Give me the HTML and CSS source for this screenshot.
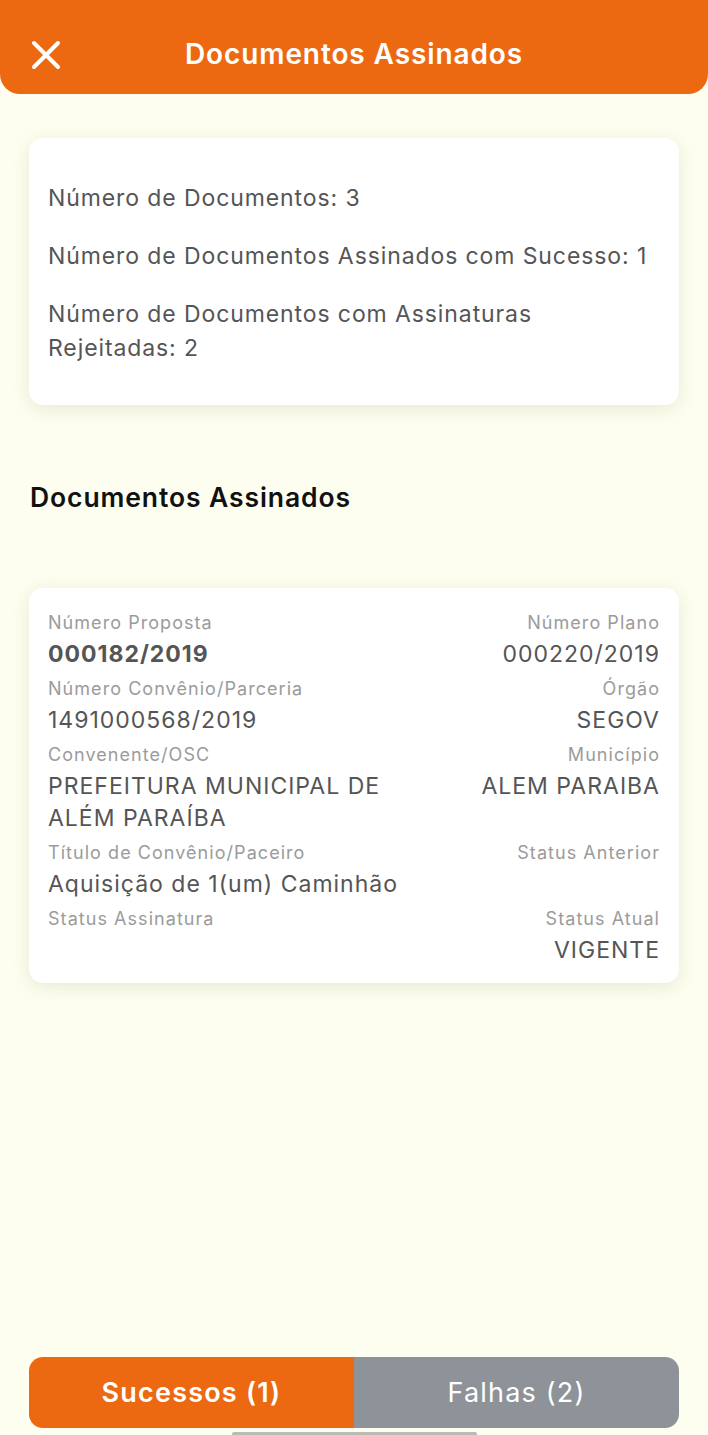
FILE: index.html
```html
<!DOCTYPE html>
<html lang="pt-BR">
<head>
<meta charset="utf-8">
<title>Documentos Assinados</title>
<link rel="stylesheet" href="styles.css">
</head>
<body>
<header class="topbar">
  <button class="close" aria-label="Fechar">
    <svg width="30" height="30" viewBox="0 0 30 30"><path d="M3 3 L27 27 M27 3 L3 27" stroke="#fff" stroke-width="4" stroke-linecap="round" fill="none"/></svg>
  </button>
  <h1 class="title">Documentos Assinados</h1>
</header>
<main class="content">
  <section class="card summary">
    <p>Número de Documentos: 3</p>
    <p>Número de Documentos Assinados com Sucesso: 1</p>
    <p>Número de Documentos com Assinaturas Rejeitadas: 2</p>
  </section>
  <h2 class="section-title">Documentos Assinados</h2>
  <section class="card doc">
    <div class="row">
      <div class="field"><div class="label">Número Proposta</div><div class="value strong">000182/2019</div></div>
      <div class="field right"><div class="label">Número Plano</div><div class="value">000220/2019</div></div>
    </div>
    <div class="row">
      <div class="field"><div class="label">Número Convênio/Parceria</div><div class="value">1491000568/2019</div></div>
      <div class="field right"><div class="label">Órgão</div><div class="value">SEGOV</div></div>
    </div>
    <div class="row">
      <div class="field"><div class="label">Convenente/OSC</div><div class="value">PREFEITURA MUNICIPAL DE ALÉM PARAÍBA</div></div>
      <div class="field right"><div class="label">Município</div><div class="value">ALEM PARAIBA</div></div>
    </div>
    <div class="row">
      <div class="field"><div class="label">Título de Convênio/Paceiro</div><div class="value">Aquisição de 1(um) Caminhão</div></div>
      <div class="field right"><div class="label">Status Anterior</div></div>
    </div>
    <div class="row">
      <div class="field"><div class="label">Status Assinatura</div></div>
      <div class="field right"><div class="label">Status Atual</div><div class="value">VIGENTE</div></div>
    </div>
  </section>
</main>
<footer class="tabs">
  <div class="tab active">Sucessos (1)</div>
  <div class="tab">Falhas (2)</div>
</footer>
<div class="home-indicator"></div>
</body>
</html>
```

FILE: styles.css
```css
* { box-sizing: border-box; }
html, body { margin: 0; padding: 0; }
body {
  width: 708px;
  min-height: 1435px;
  background: #fdfeef;
  font-family: Inter, Roboto, "Noto Sans", "Liberation Sans", sans-serif;
  display: flex;
  flex-direction: column;
  position: relative;
}
.topbar {
  height: 94px;
  background: #ec6912;
  border-radius: 0 0 20px 20px;
  display: flex;
  align-items: center;
  justify-content: center;
  position: relative;
  padding-top: 14px;
}
.close {
  position: absolute;
  left: 31px;
  top: 40px;
  width: 30px;
  height: 30px;
  padding: 0;
  border: 0;
  background: none;
}
.close svg { display: block; }
.title {
  margin: 0;
  color: #fff;
  font-size: 28px;
  font-weight: 600;
  letter-spacing: 0.9px;
}
.content {
  flex: 1;
  padding: 0 29px;
}
.card {
  background: #fff;
  border-radius: 14px;
  box-shadow: 0 4px 18px rgba(180, 180, 140, 0.28);
}
.summary {
  margin-top: 44px;
  padding: 43px 19px 40px;
  color: #555;
  font-size: 23px;
  line-height: 34px;
  letter-spacing: 0.9px;
}
.summary p { margin: 0 0 24px; }
.summary p:last-child { margin-bottom: 0; }
.section-title {
  margin: 75px 0 0 1px;
  font-size: 26.5px;
  line-height: 34px;
  font-weight: 600;
  letter-spacing: 0.9px;
  color: #111;
}
.doc {
  margin-top: 74px;
  padding: 16px 19px 17px;
}
.row {
  display: flex;
  justify-content: space-between;
  gap: 50px;
}
.field { min-width: 0; }
.field:first-child { flex: 1; }
.field.right { text-align: right; flex: none; }
.label {
  color: #9b9b9b;
  font-size: 18px;
  line-height: 30px;
  padding-top: 4px;
  letter-spacing: 1.05px;
}
.value {
  color: #555;
  font-size: 23px;
  line-height: 32px;
  letter-spacing: 1px;
}
.value.strong { font-weight: 700; }
.tabs {
  display: flex;
  margin: 0 29px 7px;
  height: 71px;
  border-radius: 14px;
  overflow: hidden;
}
.tab {
  flex: 1;
  display: flex;
  align-items: center;
  justify-content: center;
  color: #fff;
  font-size: 27px;
  font-weight: 500;
  letter-spacing: 1.2px;
  background: #8e9299;
}
.tab.active { background: #ec6912; font-weight: 600; }
.tab:not(.active) { font-weight: 400; }
.home-indicator {
  position: absolute;
  left: 232px;
  bottom: 0;
  width: 245px;
  height: 3px;
  background: #b9bbb6;
  border-radius: 2px 2px 0 0;
}
```
